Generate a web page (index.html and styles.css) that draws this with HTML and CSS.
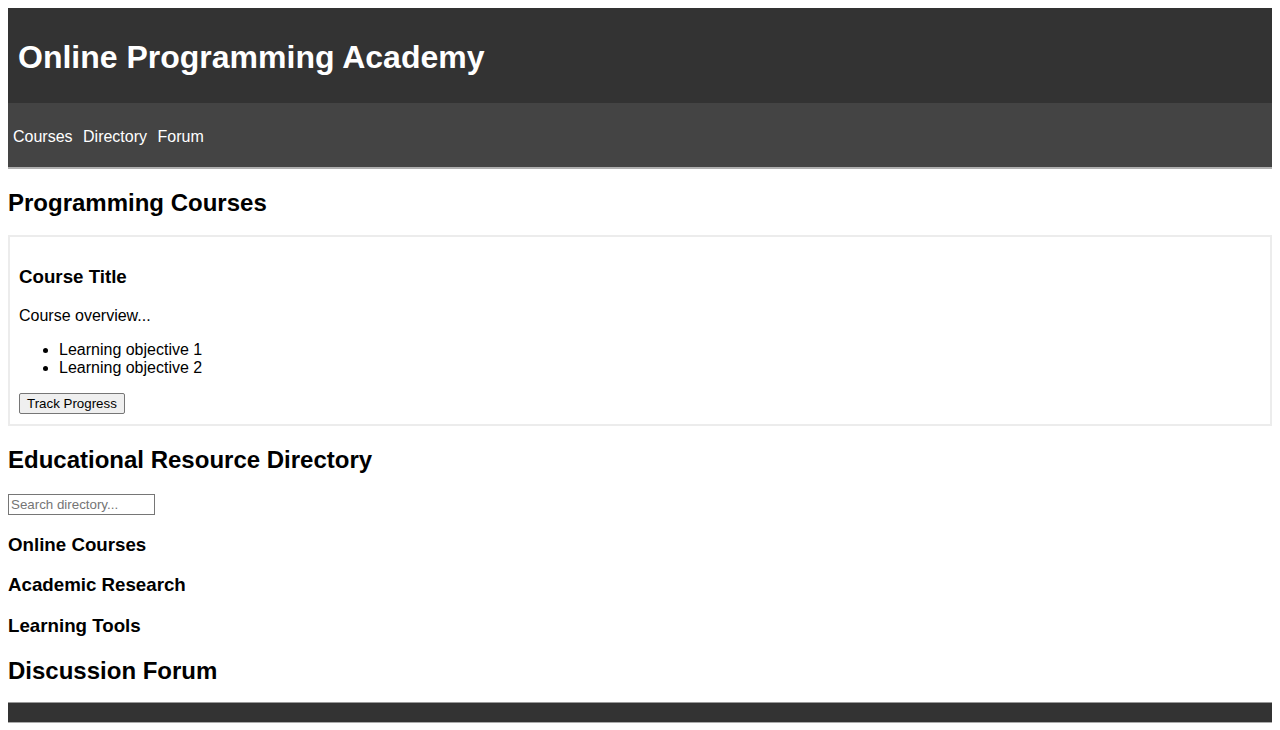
FILE: index.html
```html
<!DOCTYPE html>
<html lang="en">
<head>
<meta charset="utf-8">
<title>Online Programming Academy</title>
<link rel="stylesheet" href="styles.css">
</head>
<body>
<header class="site-header">
  <div class="brand">
    <h1 class="brand-title">Online Programming Academy</h1>
  </div>
  <nav class="main-nav">
    <a class="nav-link" href="#courses">Courses</a>
    <a class="nav-link" href="#directory">Directory</a>
    <a class="nav-link" href="#forum">Forum</a>
  </nav>
</header>
<main>
  <section id="courses">
    <h2>Programming Courses</h2>
    <div class="course-card">
      <h3>Course Title</h3>
      <p>Course overview...</p>
      <ul>
        <li>Learning objective 1</li>
        <li>Learning objective 2</li>
      </ul>
      <button class="track-btn" type="button">Track Progress</button>
    </div>
  </section>
  <section id="directory">
    <h2>Educational Resource Directory</h2>
    <input class="search" type="text" placeholder="Search directory...">
    <h3>Online Courses</h3>
    <h3>Academic Research</h3>
    <h3>Learning Tools</h3>
  </section>
  <section id="forum">
    <h2 class="forum-title">Discussion Forum</h2>
  </section>
</main>
<footer class="site-footer"></footer>
</body>
</html>
```

FILE: styles.css
```css
body {
  margin: 8px;
  font-family: "Liberation Sans", Arial, sans-serif;
  color: #000;
  background: #fff;
}

.site-header {
  background: #333;
  color: #fff;
}

.brand {
  padding: 10px 10px 5px;
}

.brand-title {
  margin: 21.44px 0;
  font-size: 32px;
}

.main-nav {
  background: #444;
  padding: 25px 5px 21px;
  border-bottom: 2px solid #b0b0b0;
  line-height: 18px;
}

.nav-link {
  color: #fff;
  text-decoration: none;
  font-size: 16px;
  margin-right: 6px;
}

h2 {
  font-size: 24px;
  margin: 19.92px 0;
}

h3 {
  font-size: 18.72px;
  margin: 18.72px 0;
}

.course-card {
  border: 2px solid #ececec;
  margin-top: -2px;
  padding: 11px 9px 10px;
}

.course-card p {
  margin: 16px 0;
}

.course-card ul {
  margin: 16px 0;
  padding-left: 40px;
}

.track-btn {
  font-family: "Liberation Sans", Arial, sans-serif;
  font-size: 13.333px;
  padding: 1px 7px;
  height: 21px;
  background: #efefef;
  border: 1px solid #767676;
  border-radius: 2px;
  color: #000;
}

.search {
  display: block;
  box-sizing: border-box;
  width: 147px;
  height: 21px;
  padding: 1px 2px;
  border: 1px solid #767676;
  font-family: "Liberation Sans", Arial, sans-serif;
  font-size: 13.333px;
  margin: 0;
}

.search::placeholder {
  color: #757575;
}

.forum-title {
  margin-bottom: 17px;
}

.site-footer {
  background: #333;
  height: 19px;
  border-top: 1px solid #999;
  border-bottom: 1px solid #aaa;
}
```
